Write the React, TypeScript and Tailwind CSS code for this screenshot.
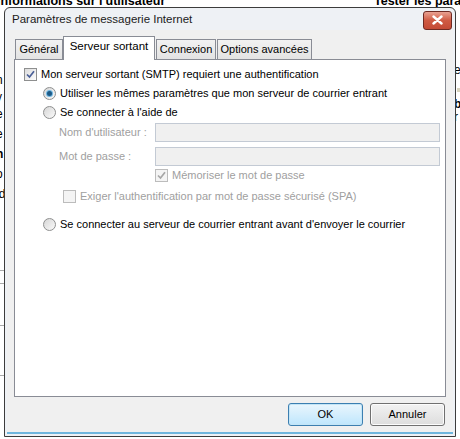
import React from "react";

const Check = ({ checked, disabled }: { checked?: boolean; disabled?: boolean }) => (
  <span
    className={`relative inline-flex h-[13px] w-[13px] shrink-0 items-center justify-center border ${
      disabled ? "border-[#bcbcbc] bg-[#f4f4f4]" : "border-[#8e8f8f] bg-gradient-to-br from-[#dcdcdc] to-[#fdfdfd]"
    }`}
  >
    {checked && (
      <svg width="9" height="9" viewBox="0 0 9 9">
        <path
          d="M1 4.5 L3.5 7 L8 1.2"
          fill="none"
          stroke={disabled ? "#a6a6a6" : "#4a5f97"}
          strokeWidth="1.7"
        />
      </svg>
    )}
  </span>
);

const Radio = ({ checked }: { checked?: boolean }) => (
  <span className="relative inline-flex h-[13px] w-[13px] shrink-0 items-center justify-center rounded-full border border-[#8e8f8f] bg-gradient-to-br from-[#d6d6d6] to-[#fafafa]">
    {checked && (
      <span className="h-[5px] w-[5px] rounded-full bg-[#1d5a86] shadow-[0_0_0_1px_#6fb7e3]" />
    )}
  </span>
);

export default function App() {
  return (
    <div
      className="relative h-[439px] w-[460px] overflow-hidden whitespace-nowrap bg-white text-[11px] leading-[15px] text-black"
      style={{ fontFamily: '"Liberation Sans", Arial, sans-serif' }}
    >
      {/* background window fragments */}
      <div className="absolute left-[-3px] top-[-6px] font-bold text-[12.5px]">Informations sur l'utilisateur</div>
      <div className="absolute left-[374px] top-[-6px] font-bold text-[12.5px]">Tester les paramètres</div>
      <div className="absolute left-[-4px] top-[72px] text-[12px] leading-[17px]">
        <div>n</div>
        <div>y</div>
        <div>e</div>
        <div className="mt-[3px]">e</div>
        <div className="mt-[3px] font-bold">n</div>
        <div className="mt-[3px]">o</div>
        <div className="mt-[3px]">ld</div>
      </div>
      <div className="absolute left-0 top-[270px] h-px w-[6px] bg-[#aaa]" />
      <div className="absolute left-0 top-[283px] h-px w-[6px] bg-[#aaa]" />
      <div className="absolute left-0 top-[325px] h-px w-[6px] bg-[#aaa]" />
      <div className="absolute left-0 top-[375px] h-px w-[6px] bg-[#aaa]" />
      <div className="absolute left-[454px] top-[64px] text-[12px] leading-[13px]">
        <div>e</div>
      </div>
      <div className="absolute left-[457px] top-[88px] h-[4px] w-[3px] bg-[#d8d4bf]" />
      <div className="absolute left-[454px] top-[98px] text-[12px] leading-[13px]">
        <div className="font-bold">b</div>
        <div>r</div>
      </div>

      {/* dialog */}
      <div className="absolute left-[4px] top-[7px] flex h-[430px] w-[452px] flex-col rounded-t-[6px] border border-[#3c3c3c] bg-[#eef1f5]">
        {/* title bar */}
        <div className="flex h-[22px] shrink-0 items-center justify-between pl-[7px] pr-[3px]">
          <span className="text-[11.5px] text-[#1b1b1b]">Paramètres de messagerie Internet</span>
          <div className="mt-[2px] flex h-[19px] w-[29px] items-center justify-center rounded-[3px] border border-[#6e2a23] bg-gradient-to-b from-[#e8a192] via-[#cf5a43] to-[#c44a35]">
            <svg width="11" height="10" viewBox="0 0 11 10">
              <path d="M1.5 1.5 L9.5 8.5 M9.5 1.5 L1.5 8.5" stroke="#fff" strokeWidth="2.4" strokeLinecap="round" />
            </svg>
          </div>
        </div>
        {/* client */}
        <div className="mx-[2px] mb-[2px] flex flex-1 flex-col border-b-[2px] border-b-[#6fb6dd] bg-[#f0f0f0] px-[7px] pt-[6px]">
          {/* tabs */}
          <div className="flex h-[23px] items-end pl-px">
            <div className="flex h-[20px] w-[48px] items-center justify-center border border-b-0 border-[#898c95] bg-gradient-to-b from-[#f2f2f2] to-[#e3e3e3]">
              Général
            </div>
            <div className="relative z-10 -mb-px flex h-[24px] w-[92px] items-start justify-center border border-b-0 border-[#898c95] bg-white pt-[2px] text-[11.5px]">
              Serveur sortant
            </div>
            <div className="ml-px flex h-[20px] w-[60px] items-center justify-center border border-b-0 border-[#898c95] bg-gradient-to-b from-[#f2f2f2] to-[#e3e3e3]">
              Connexion
            </div>
            <div className="ml-px flex h-[20px] w-[95px] items-center justify-center border border-b-0 border-[#898c95] bg-gradient-to-b from-[#f2f2f2] to-[#e3e3e3]">
              Options avancées
            </div>
          </div>
          {/* panel */}
          <div className="flex h-[338px] flex-col border border-[#898c95] bg-white pl-[9px] pr-[5px] pt-[7px]">
            <label className="flex items-center gap-[4px]">
              <Check checked />
              <span>Mon serveur sortant (SMTP) requiert une authentification</span>
            </label>
            <div className="mt-[4px] flex items-center gap-[4px] pl-[19px]">
              <Radio checked />
              <span>Utiliser les mêmes paramètres que mon serveur de courrier entrant</span>
            </div>
            <div className="mt-[4px] flex items-center gap-[4px] pl-[19px]">
              <Radio />
              <span>Se connecter à l'aide de</span>
            </div>
            <div className="mt-[3px] flex items-center pl-[35px] text-[#a0a0a0]">
              <span className="w-[96px]">Nom d'utilisateur :</span>
              <div className="h-[19px] flex-1 border border-[#c3cad4] bg-[#f0f0f0]" />
            </div>
            <div className="mt-[5px] flex items-center pl-[35px] text-[#a0a0a0]">
              <span className="w-[96px]">Mot de passe :</span>
              <div className="h-[19px] flex-1 border border-[#c3cad4] bg-[#f0f0f0]" />
            </div>
            <div className="mt-[2px] flex items-center gap-[4px] pl-[131px] text-[#a0a0a0]">
              <Check checked disabled />
              <span>Mémoriser le mot de passe</span>
            </div>
            <div className="mt-[6px] flex items-center gap-[4px] pl-[39px] text-[#a0a0a0]">
              <Check disabled />
              <span>Exiger l'authentification par mot de passe sécurisé (SPA)</span>
            </div>
            <div className="mt-[13px] flex items-center gap-[4px] pl-[19px]">
              <Radio />
              <span>Se connecter au serveur de courrier entrant avant d'envoyer le courrier</span>
            </div>
          </div>
          {/* buttons */}
          <div className="mt-[6px] flex justify-end gap-[7px] pr-[1px]">
            <button className="h-[23px] w-[75px] rounded-[3px] border border-[#3c7fb1] bg-gradient-to-b from-[#eaf6fd] to-[#bee6fd] shadow-[inset_0_0_0_1px_#c4e5f6]">
              OK
            </button>
            <button className="h-[23px] w-[75px] rounded-[3px] border border-[#707070] bg-gradient-to-b from-[#f2f2f2] to-[#dddddd] shadow-[inset_0_0_0_1px_#fcfcfc]">
              Annuler
            </button>
          </div>
        </div>
      </div>
    </div>
  );
}
